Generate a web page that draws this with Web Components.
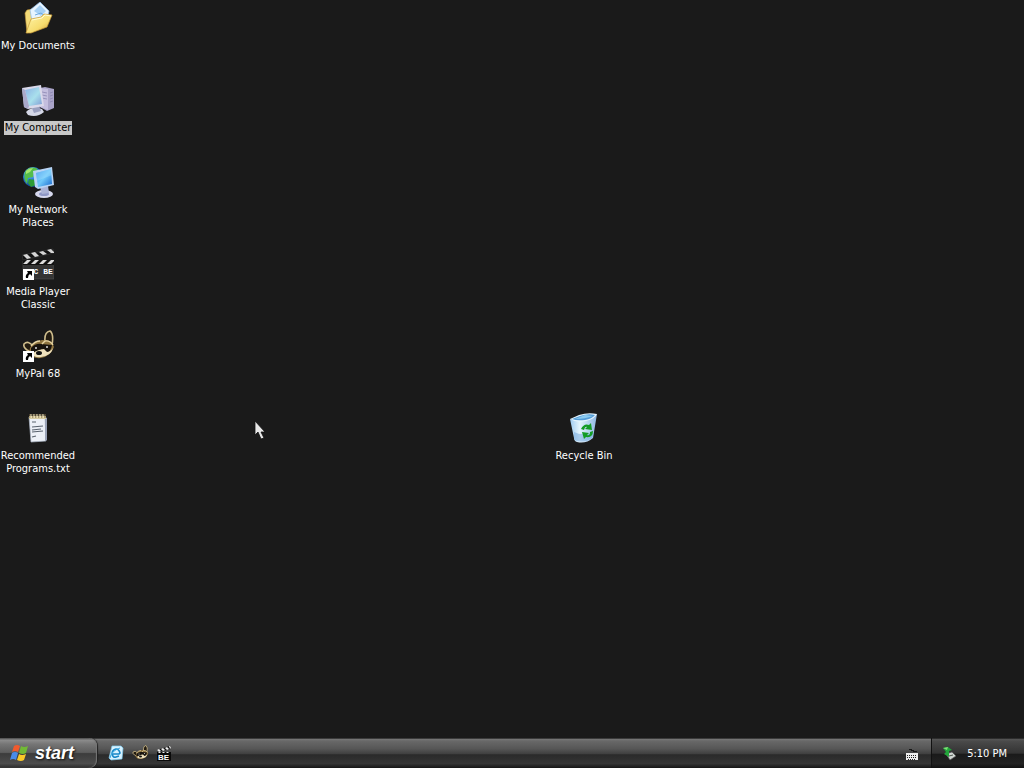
<!DOCTYPE html>
<html lang="en">
<head>
<meta charset="utf-8">
<title>Desktop</title>
<style>
html,body{margin:0;height:100%;background:#1a1a1a}
</style>
</head>
<body>
<xp-desktop></xp-desktop>
<script>
const icons={
documents:`<svg viewBox="0 0 32 32"><defs><linearGradient id="f" x1="0" y1="0" x2="1" y2="1"><stop offset="0" stop-color="#fff6ac"/><stop offset=".6" stop-color="#f6dc6e"/><stop offset="1" stop-color="#c9952b"/></linearGradient></defs>
<path d="M3 11l2-3 6-1 4 3v6l-6 13-4 2z" fill="#f3da77" stroke="#c3973a" stroke-width=".6"/>
<path d="M8 8L18 0l9 9-2 11-14 5z" fill="#e7f4ff" stroke="#8db9e6" stroke-width=".7"/>
<path d="M12 9l6-6 6 6-5 5z" fill="#a5d0f5"/><path d="M13 13l6-2 5 4" fill="none" stroke="#6ca9e0"/>
<path d="M4 31l5-14 10-2 3-3 8 1-5 12-16 6z" fill="url(#f)" stroke="#c79937" stroke-width=".7"/><path d="M10 18l10-2 3-3 6 1" fill="none" stroke="#fffbd2"/></svg>`,
computer:`<svg viewBox="0 0 32 32"><defs><linearGradient id="s" x1="0" y1="0" x2="1" y2="1"><stop offset="0" stop-color="#8bb0e4"/><stop offset=".55" stop-color="#a9e0ec"/><stop offset="1" stop-color="#7f9cd4"/></linearGradient></defs>
<path d="M18 4l5-1 9 2v19l-7 3-7-4z" fill="#a9a3c8"/><path d="M18 4l8 1v21l-8-3z" fill="#c4bede"/><path d="M20 8l5 1M20 11l5 1M20 14l5 1M28 9l3-1M28 12l3-1M28 15l3-1M28 18l3-1" stroke="#857fac" stroke-width=".7"/>
<path d="M4 28q5-5 12-4l4 1 2 3q-7 6-16 3z" fill="#d5d8e7"/><path d="M9 22l8-1 2 6-7 2z" fill="#9aa0bf"/><path d="M0 4l19-3 3 21-16 3-4-2z" fill="#dad9ea"/><path d="M3 6l14-3 3 17-13 2z" fill="url(#s)"/><path d="M0 4l3 2 4 16-1 3-4-2z" fill="#a9a9ca"/></svg>`,
network:`<svg viewBox="0 0 32 32"><defs><radialGradient id="g" cx=".35" cy=".25" r=".8"><stop stop-color="#80d8ff"/><stop offset=".5" stop-color="#277bd4"/><stop offset="1" stop-color="#0d3587"/></radialGradient><linearGradient id="s" x2="1" y2="1"><stop stop-color="#2785e8"/><stop offset=".5" stop-color="#71cafa"/><stop offset="1" stop-color="#1667ce"/></linearGradient></defs>
<circle cx="11" cy="11" r="10" fill="url(#g)"/><path d="M3 6q4-6 11-4l3 3-5 2-1 4-5 1-1 6q-4-5-2-12z" fill="#55bd4b"/><path d="M7 13l6 1 1 5-5 2-3-4z" fill="#2d9c36"/><path d="M4 5q3-3 7-3l-3 4-4 2z" fill="#a5e76c"/>
<ellipse cx="22" cy="28" rx="9" ry="4" fill="#d7d9ee"/><ellipse cx="22" cy="28" rx="5" ry="2" fill="#8f98c6"/><path d="M18 21l8-1 1 7-7 1z" fill="#abb3d6"/><path d="M11 5l19-4 2 18-16 4-3-2z" fill="#b9d4f5"/><path d="M14 7l15-4 1 15-14 3z" fill="url(#s)"/><path d="M14 7l15-4 1 6-15 6z" fill="#a7e2ff" opacity=".4"/></svg>`,
media:`<svg viewBox="0 0 32 32"><path d="M1 13h31v18H1z" fill="#343434" stroke="#505050" stroke-width=".6"/><path d="M1 12h31v5H1z" fill="#111"/><path d="M1 16l4-4h4l-4 4zM9 16l4-4h4l-4 4zM17 16l4-4h4l-4 4zM25 16l4-4h3v1l-3 3z" fill="#ddd"/><path d="M0 7L31 1l1 4L1 12z" fill="#111" stroke="#444" stroke-width=".5"/><path d="M1 7l4-1 4 4-4 1zM9 5l4-1 4 4-4 1zM17 4l4-1 4 3-4 1zM25 2l4-1 3 3v1h-3z" fill="#d5d5d5"/><text x="2" y="26" font-family="Liberation Mono" font-weight="700" font-size="8" fill="#fff">MPC BE</text></svg>`,
raccoon:`<svg viewBox="0 0 32 32"><path d="M23 12q-1-10 5-11 4 3 2 14" fill="#221b10" stroke="#cfbd8c" stroke-width="1.6"/><path d="M2 14q4-4 9 2l-2 6-4-2q-4-3-3-6z" fill="#221b10" stroke="#cfbd8c" stroke-width="1.6"/><path d="M8 18q3-7 12-8 10-1 12 7-3 9-13 11-9 1-12-5z" fill="#8d733f"/><path d="M9 18q5-5 10-4l11 1q-1 7-6 8l-4-4-5 4-6-1z" fill="#17130e"/><path d="M9 16q4-5 9-5M20 14l3-3q5-1 8 4" stroke="#e7d5a4" fill="none" stroke-width="1.4"/><path d="M10 24q3-3 7-4l5-1 3 3q3 0 6-4-2 8-12 9-6 1-9-3z" fill="#eee1bc"/><ellipse cx="17" cy="23" rx="3" ry="2" fill="#111"/><circle cx="14" cy="18" r="1" fill="#ddd"/><circle cx="25" cy="17" r="1" fill="#ddd"/></svg>`,
notes:`<svg viewBox="0 0 32 32"><path d="M7 5l16-1 1 25-15 1z" fill="#ecf0f7" stroke="#aab4c4" stroke-width=".7"/><path d="M23 5l2 1v22l-2 1z" fill="#9aa3b7"/><path d="M7 4h17v3H7z" fill="#d5cba2"/><path d="M8 2v4M11 2v4M14 2v4M17 2v4M20 2v4M23 2v4" stroke="#806c46"/><path d="M9 2v4M12 2v4M15 2v4M18 2v4M21 2v4" stroke="#f9edc0"/><path d="M10 10h4M10 15l11-1M10 18l9-1M10 20l11-1M10 25l4-1" stroke="#59626e" stroke-width="1.2"/></svg>`,
bin:`<svg viewBox="0 0 32 32"><defs><linearGradient id="b" x2="1"><stop stop-color="#9ecaf0"/><stop offset=".35" stop-color="#e3f4fd"/><stop offset="1" stop-color="#8db6e2"/></linearGradient></defs><path d="M2 7q12 4 27-5l-4 24q-7 6-16 4-3-1-3-4z" fill="url(#b)"/><path d="M2 7L11 3Q20 0 29 2q-2 5-11 7Q8 11 2 7z" fill="#e5f5ff"/><path d="M4 7L12 4Q20 1 27 3q-3 4-10 5Q9 9 4 7z" fill="#559dd8"/><path d="M7 7q10 0 18-3l-8-1z" fill="#8acbf1"/><path d="M6 20q7 4 20 1l-2 5q-7 5-15 3-3-1-3-4z" fill="#70a5db" opacity=".5"/><path d="M13 17q3-6 8-4l2-2 1 7-7-1 2-2q-2-1-3 3zM25 19q0 7-7 6l-2 2-2-7 7 1-2 2q3 1 3-3z" fill="#139c25"/></svg>`,
flag:`<svg viewBox="0 0 20 20"><path d="M4 3q3-2 6 0L8 9Q5 7 2 9z" fill="#f15a2d"/><path d="M11 3q3 2 7 0l-2 7q-3 2-7 0z" fill="#71b935"/><path d="M2 10q3-2 6 0l-2 7q-3-2-6 0z" fill="#4a8be8"/><path d="M9 11q3 2 7 0l-2 6q-3 2-7 0z" fill="#fac928"/></svg>`,
page:`<svg viewBox="0 0 16 16"><path d="M4 1h9l2 2-1 11-11 1-2-2z" fill="#d7f2ff" stroke="#7fcdf2" stroke-width=".7"/><path d="M5 9h6l1-1Q11 4 8 4 4 5 4 9q1 4 4 3l3-1" fill="none" stroke="#1787c8" stroke-width="1.6"/><path d="M2 13Q3 6 12 3" fill="none" stroke="#3aa9e0"/></svg>`,
clap:`<svg viewBox="0 0 16 16"><path d="M1 7h14v9H1z" fill="#090909"/><path d="M1 5L14 1l1 3L2 7z" fill="#111"/><path d="M1 5l2-1 2 2-2 1zM5 4l2-1 2 2-2 1zM9 3l2-1 2 2-2 1zM13 1h1l1 2-1 1zM2 8h2l1-1H3zM6 8h2l1-1H7zM10 8h2l1-1h-2z" fill="#eee"/><text x="2" y="15" font-family="Liberation Sans" font-weight="700" font-size="8" fill="#fff">BE</text></svg>`,
keyboard:`<svg viewBox="0 0 16 16" shape-rendering="crispEdges"><path d="M2 8h12v7H2z" fill="#eee"/><path d="M3 10h10M3 12h10M4 14h8" stroke="#222" stroke-dasharray="1 1"/><path d="M5 4h2v1h2v1h3v1" fill="none" stroke="#161616"/></svg>`,
device:`<svg viewBox="0 0 16 16"><path d="M5 9l6-2 4 4-6 4z" fill="#d0d5d2" stroke="#555" stroke-width=".7"/><path d="M8 11l4-1" stroke="#505a51"/><path d="M2 3l5-1 4 3-3 1v6L3 9l2-2z" fill="#23a63b"/><path d="M2 3l5-1-1 3z" fill="#7de276"/></svg>`,
pointer:`<svg viewBox="0 0 12 20"><path d="M1 1v14l3-3 3 7 3-1-3-6h4z" fill="#e8e8e8" stroke="#111" stroke-width=".8"/></svg>`
};
class XpIcon extends HTMLElement{
 constructor(){super();this.attachShadow({mode:'open'})}
 connectedCallback(){this.shadowRoot.innerHTML=`<style>:host{display:block;width:var(--icon-size,32px);height:var(--icon-size,32px)}svg{display:block;width:100%;height:100%}</style>${icons[this.getAttribute('name')]}`;this.shadowRoot.querySelector('svg').setAttribute('aria-hidden','true')}
}
customElements.define('xp-icon',XpIcon);

class XpShortcut extends HTMLElement{
 constructor(){super();this.attachShadow({mode:'open'})}
 connectedCallback(){this.shadowRoot.innerHTML=`<style>
:host{display:block}
button{all:unset;box-sizing:border-box;width:100%;display:flex;flex-direction:column;align-items:center;gap:5px;font:11px/13px "DejaVu Sans Condensed","Noto Sans",sans-serif;color:#fff;text-align:center;cursor:default}
.art{position:relative}
.arrow{position:absolute;left:1px;bottom:0;width:11px;height:11px;display:none}
:host([shortcut]) .arrow{display:block}
.label{padding:0 1px 1px}
:host([selected]) .label{background:#c8c8c8;color:#000}
</style><button type="button"><span class="art"><xp-icon name="${this.getAttribute('icon')}"></xp-icon><svg class="arrow" viewBox="0 0 11 11" aria-hidden="true"><path d="M0 0h11v11H0z" fill="#fff"/><path d="M4 2h5v5L7 5Q5 6 5 9H3Q2 6 5 4z" fill="#000"/></svg></span><span class="label"><slot></slot></span></button>`}
}
customElements.define('xp-shortcut',XpShortcut);

class XpStart extends HTMLElement{
 constructor(){super();this.attachShadow({mode:'open'}).innerHTML=`<style>
:host{display:flex}
button{all:unset;box-sizing:border-box;display:flex;align-items:center;gap:5px;width:97px;padding-left:10px;color:#fff;font:italic 700 18px/20px "Liberation Sans",sans-serif;text-shadow:1px 1px 2px #111;background:linear-gradient(#444 0,#8c8c8c 7%,#767676 20%,#5d5d5d 48%,#3c3c3c 52%,#4c4c4c 85%,#2a2a2a 100%);border-radius:0 8px 8px 0;box-shadow:inset -1px 0 1px #777,1px 0 1px #222}
xp-icon{--icon-size:20px}
</style><button type="button"><xp-icon name="flag"></xp-icon><slot></slot></button>`}
}
customElements.define('xp-start',XpStart);

class XpTaskbar extends HTMLElement{
 constructor(){super();this.attachShadow({mode:'open'}).innerHTML=`<style>
:host{display:flex;height:30px;background:linear-gradient(#111 0,#777 4%,#686868 10%,#575757 35%,#414141 52%,#2a2a2a 56%,#353535 85%,#161616 100%)}
nav{display:flex;align-items:center;gap:8px;padding-left:11px;flex:1}
.tool{all:unset;display:block;--icon-size:16px}
.language{display:flex;align-items:center;padding-right:11px}
.tray{box-sizing:border-box;display:flex;align-items:center;gap:10px;padding:0 17px 0 9px;border-left:1px solid #111;background:linear-gradient(#111 0,#555 4%,#494949 12%,#333 50%,#1a1a1a 55%,#222 85%,#111);color:#fff;font:11px/13px "DejaVu Sans Condensed","Noto Sans",sans-serif}
</style><xp-start>start</xp-start><nav aria-label="Quick launch"><button class="tool" type="button" aria-label="Browser"><xp-icon name="page"></xp-icon></button><button class="tool" type="button" aria-label="MyPal"><xp-icon name="raccoon"></xp-icon></button><button class="tool" type="button" aria-label="Media player"><xp-icon name="clap"></xp-icon></button></nav><div class="language"><button class="tool" type="button" aria-label="Keyboard"><xp-icon name="keyboard"></xp-icon></button></div><div class="tray"><button class="tool" type="button" aria-label="Remove hardware"><xp-icon name="device"></xp-icon></button><time datetime="17:10">5:10 PM</time></div>`}
}
customElements.define('xp-taskbar',XpTaskbar);

class XpDesktop extends HTMLElement{
 constructor(){super();this.attachShadow({mode:'open'}).innerHTML=`<style>
:host{display:flex;flex-direction:column;min-height:100vh;position:relative;background:#1a1a1a}
main{flex:1;display:grid;grid-template-columns:repeat(auto-fill,76px);grid-auto-rows:82px;column-gap:2px;padding-top:2px}
xp-shortcut{grid-column:1}
.bin{grid-column:8;grid-row:6}
.pointer{position:absolute;left:254px;top:420px;width:12px;height:20px;pointer-events:none;overflow:hidden}
.pointer xp-icon{--icon-size:20px;margin-left:-4px}
</style><main><xp-shortcut icon="documents">My Documents</xp-shortcut><xp-shortcut icon="computer" selected>My Computer</xp-shortcut><xp-shortcut icon="network">My Network Places</xp-shortcut><xp-shortcut icon="media" shortcut>Media Player Classic</xp-shortcut><xp-shortcut icon="raccoon" shortcut>MyPal 68</xp-shortcut><xp-shortcut icon="notes">Recommended Programs.txt</xp-shortcut><xp-shortcut class="bin" icon="bin">Recycle Bin</xp-shortcut></main><div class="pointer"><xp-icon name="pointer"></xp-icon></div><xp-taskbar></xp-taskbar>`}
}
customElements.define('xp-desktop',XpDesktop);
</script>
</body>
</html>
